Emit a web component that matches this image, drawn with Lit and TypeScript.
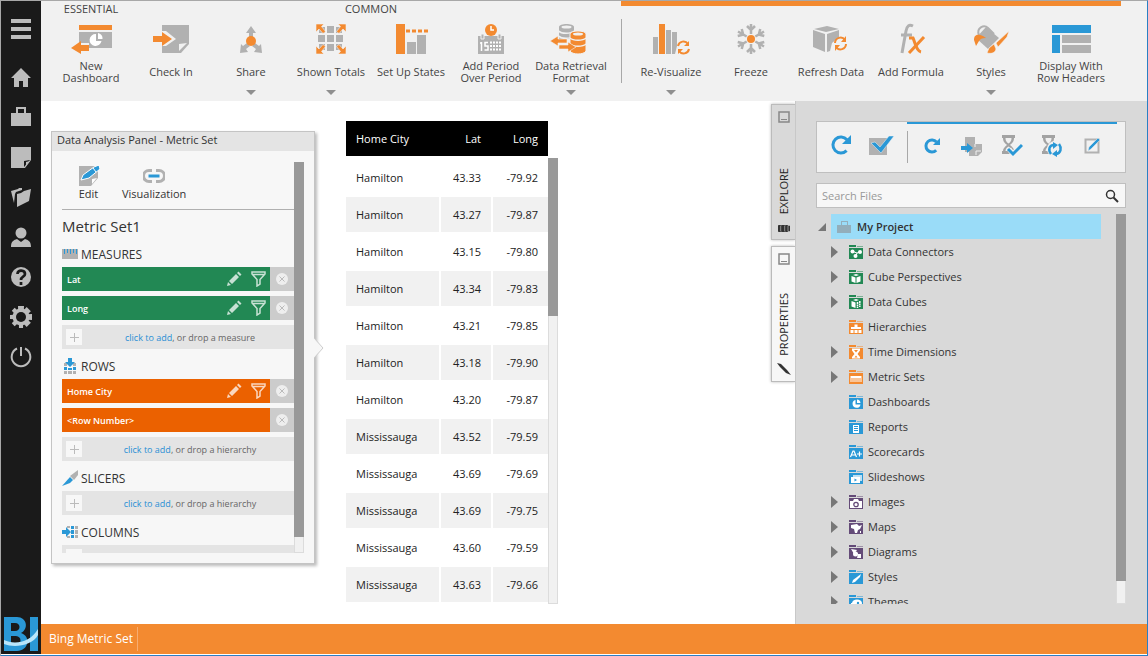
import { LitElement, html, svg, css, nothing } from "lit";
import { customElement, property } from "lit/decorators.js";

const ORANGE = "#f38a30";
const GREY = "#b1b1b1";
const BLUE = "#2a98d6";

const draw = (w: number, h: number, body: unknown) =>
  html`<svg width=${w} height=${h} viewBox="0 0 ${w} ${h}" aria-hidden="true">${body}</svg>`;

/* Ribbon icons share a 44x30 box. */
const ribbonIcons: Record<string, unknown> = {
  dashboard: svg`<path d="M10 1h33v5H10z" fill=${ORANGE}/><path d="M10 8h33v16H20v-5H10z" fill=${GREY}/>
    <path d="M27 10a6 6 0 1 0 5.500 7h-5.500z" fill="#fff"/><path d="M29 9a5.500 5.500 0 0 1 4.500 6H29z" fill="#fff"/>
    <path d="M2 24l10-7v4h8v6h-8v3z" fill=${ORANGE}/>`,
  checkin: svg`<path d="M13 1h27v19l-8 9H13v-7h4l10-7-10-8h-4z" fill=${GREY}/><path d="M30 27v-7l8-1z" fill="#f1f1f1"/>
    <path d="M4 12h9V8l10 7-10 7v-4H4z" fill=${ORANGE}/>`,
  share: svg`<g fill=${GREY}><path d="M22 2l5 7h-3v5h-4V9h-3z"/><path d="M11 29l1-9 2 2 4-3 3 3-4 3 2 3z"/><path d="M33 29l-1-9-2 2-4-3-3 3 4 3-2 3z"/></g>
    <circle cx="22" cy="17" r="5" fill=${ORANGE}/>`,
  totals: svg`<g fill=${GREY}><path d="M10 3h6v6h-6zM18 2h7v7h-7zM27 3h6v6h-6zM9 11h7v7H9zM18 11h7v7h-7zM27 11h7v7h-7zM10 20h6v6h-6zM18 20h7v7h-7zM27 20h6v6h-6z"/></g>
    <g fill=${ORANGE} stroke="#f1f1f1" stroke-width=".6"><path d="M7 0h8l-2.500 2.500 4 5-2.500 2-4-4.500L7 8z"/><path d="M37 0h-8l2.500 2.500-4 5 2.500 2 4-4.500L37 8z"/><path d="M7 30h8l-2.500-2.500 4-5-2.500-2-4 4.500L7 22z"/><path d="M37 30h-8l2.500-2.500-4-5 2.500-2 4 4.500L37 22z"/></g>`,
  states: svg`<path d="M7 0h9v30H7z" fill=${ORANGE}/><path d="M17 7h22" stroke=${ORANGE} stroke-width="3" stroke-dasharray="4 2"/>
    <path d="M18 18h9v12h-9zM28 11h9v19h-9z" fill=${GREY}/>`,
  period: svg`<path d="M9 12h26v18H9z" fill=${GREY}/><path d="M12 10h3v5h-3zM29 10h3v5h-3z" fill=${GREY} stroke="#f1f1f1"/>
    <path d="M12.500 18v9M11 19h1.500M19 18.500h-3v3.500h3v4h-3.500" stroke="#fff" fill="none" stroke-width="1.500"/>
    <path d="M21 18.500h12M21 22h12M21 25.500h12" stroke="#fff" stroke-width="2" stroke-dasharray="2 1"/>
    <circle cx="22" cy="6" r="6" fill=${ORANGE}/><path d="M22 2v4h3" stroke="#fff" fill="none" stroke-width="1.500"/>`,
  retrieval: svg`<path d="M10 3c0-4 15-4 15 0v12h-15z" fill=${GREY}/><ellipse cx="17.500" cy="3" rx="5" ry="1.500" fill="#f1f1f1"/><path d="M10 7c2 3 12 3 15 0M10 12c2 3 12 3 15 0" stroke="#f1f1f1" fill="none" stroke-width="1.500"/>
    <path d="M21 10c0-4 16-4 16 0v17c-2 4-14 4-16 0z" fill=${ORANGE} stroke="#f1f1f1"/><ellipse cx="29" cy="10" rx="5" ry="1.500" fill="#f1f1f1"/><path d="M21 14c3 3 13 3 16 0M21 20c3 3 13 3 16 0" stroke="#f1f1f1" fill="none" stroke-width="1.500"/>
    <path d="M1 17l8-5v3h9v4H9v3zM27 23l-8-5v3h-9v4h9v3z" fill=${ORANGE} stroke="#f1f1f1" stroke-width=".6"/>`,
  visualize: svg`<path d="M4 13h5v17H4zM17 6h5v24h-5zM23 8h5v14l-2 8h-3z" fill=${GREY}/><path d="M10 0h6v30h-6z" fill=${ORANGE}/>
    <g fill="none" stroke=${ORANGE} stroke-width="2"><path d="M29 22a5.500 5.500 0 0 1 10-2M40 25a5.500 5.500 0 0 1-10 2"/></g><path d="M40 17v5h-5zM29 30v-5h5z" fill=${ORANGE}/>`,
  freeze: svg`<g stroke=${GREY} stroke-width="2.500" fill="none">${[0, 60, 120, 180, 240, 300].map(
    (a) => svg`<path transform="rotate(${a} 22 15)" d="M22 10V0M18 2l4 4 4-4"/>`)}</g><circle cx="22" cy="15" r="4" fill=${ORANGE}/>`,
  refresh: svg`<g fill=${GREY}><path d="M18 2l12 3-13 3L5 5z"/><path d="M4 6l12 4v18L4 23z"/><path d="M18 10l12-4v7l-7 6-2 8-3 1z"/></g>
    <g fill="none" stroke=${ORANGE} stroke-width="2"><path d="M26 19a5.500 5.500 0 0 1 10-3M37 20a5.500 5.500 0 0 1-10 3"/></g><path d="M37 12v6h-5zM26 27v-6h5z" fill=${ORANGE}/>`,
  formula: svg`<path d="M24 2c-4-2-6 0-7 5l-4 22" stroke=${GREY} stroke-width="3" fill="none"/><path d="M12 11h11" stroke=${GREY} stroke-width="3"/>
    <path d="M20 14h4c2 4 3 13 8 14" stroke=${ORANGE} stroke-width="3" fill="none"/><path d="M35 13L20 29" stroke=${ORANGE} stroke-width="3"/>`,
  styles: svg`<path d="M17 3l13 11-11 11L7 14z" fill=${GREY}/><path d="M10 11c-3-7 5-11 9-7l6 6" fill="none" stroke=${GREY} stroke-width="2"/>
    <path d="M14 12c-7-3-9 0-9 4l2 6 3-5c1-2 3-3 7-3z" fill=${ORANGE}/><path d="M40 7L27 19l2 4L38 13zM25 20l-5 4-2 5c5 1 8 0 9-4z" fill=${ORANGE} stroke="#f1f1f1" stroke-width=".6"/>`,
  headers: svg`<path d="M3 1h39v8H3zM3 11h8v18H3z" fill=${BLUE}/><path d="M13 11h29v8H13zM13 21h29v8H13z" fill=${GREY}/>`,
};

interface Command { icon: string; label: string; menu?: boolean }

const essential: Command[] = [{ icon: "dashboard", label: "New Dashboard" }];
const common: Command[] = [
  { icon: "checkin", label: "Check In" },
  { icon: "share", label: "Share", menu: true },
  { icon: "totals", label: "Shown Totals", menu: true },
  { icon: "states", label: "Set Up States" },
  { icon: "period", label: "Add Period Over Period" },
  { icon: "retrieval", label: "Data Retrieval Format", menu: true },
];
const contextual: Command[] = [
  { icon: "visualize", label: "Re-Visualize", menu: true },
  { icon: "freeze", label: "Freeze" },
  { icon: "refresh", label: "Refresh Data" },
  { icon: "formula", label: "Add Formula" },
  { icon: "styles", label: "Styles", menu: true },
  { icon: "headers", label: "Display With Row Headers" },
];

const navIcons: [string, unknown][] = [
  ["Home", svg`<path d="M12 3l10 10h-3v9h-5v-6h-4v6H5v-9H2z"/>`],
  ["Projects", svg`<path d="M2 8h20v13H2zM7 8V2h10v6h-2V4H9v4z"/>`],
  ["Notes", svg`<path d="M2 2h20v13l-6 8H2z"/><path d="M15 22v-6l6-1z" fill="#1a1a1a"/><path d="M17 21v-4l4-1z"/>`],
  ["Folders", svg`<path d="M2 6l7-2 1-1 3 0v2L7 7l-1 2-1 9z"/><path d="M8 9l4-1 3-2 7-2-2 12-12 6z"/>`],
  ["Account", svg`<circle cx="12" cy="8" r="5.500"/><path d="M2 22c0-6 3-7 6-8l4 3 4-3c3 1 6 2 6 8z"/>`],
  ["Help", svg`<circle cx="12" cy="12" r="10"/><path d="M8.500 9c0-5 7.500-4 7.500 0 0 3-4 2.500-4 6M12 17v3" stroke="#1a1a1a" stroke-width="2.700" fill="none"/>`],
  ["Settings", svg`<g>${[0, 45, 90, 135].map((a) => svg`<path transform="rotate(${a} 12 12)" d="M9 1h6l-1 22h-4z"/>`)}<circle cx="12" cy="12" r="8.500"/></g><circle cx="12" cy="12" r="5" fill="#1a1a1a"/>`],
  ["Sign out", svg`<path d="M8 3.500a9.300 9.300 0 1 0 8 0M12 2v9" fill="none" stroke="#bcbcbc" stroke-width="2"/>`],
];

interface Field { label: string; editable: boolean }
interface Section { title: string; icon: unknown; tone: string; fields: Field[]; drop: string }

const sections: Section[] = [
  {
    title: "MEASURES", tone: "green", drop: "measure",
    icon: svg`<path d="M0 3h16v10H0z" fill=${GREY}/><path d="M2.500 3v5M5.500 3v4M8.500 3v5M11.500 3v4M14.500 3v5" stroke=${BLUE} stroke-width="1"/>`,
    fields: [{ label: "Lat", editable: true }, { label: "Long", editable: true }],
  },
  {
    title: "ROWS", tone: "orange", drop: "hierarchy",
    icon: svg`<path d="M2 5h3v3H2zM11 5h3v3h-3zM2 13h3v3H2zM6 13h4v3H6zM11 13h3v3h-3z" fill=${GREY}/><path d="M2 9h3v3H2zM6 10h4v2H6zM11 9h3v3h-3zM6 0h4v4h3L8 9 3 4h3z" fill=${BLUE}/>`,
    fields: [{ label: "Home City", editable: true }, { label: "<Row Number>", editable: false }],
  },
  {
    title: "SLICERS", tone: "orange", drop: "hierarchy", fields: [],
    icon: svg`<path d="M16 0v5l-4 5-4-4z" fill=${GREY}/><path d="M8 7l3 3-3 3-8 3z" fill=${BLUE}/>`,
  },
  {
    title: "COLUMNS", tone: "orange", drop: "hierarchy", fields: [],
    icon: svg`<path d="M13 2h3v3h-3zM13 6h3v4h-3zM13 11h3v3h-3zM5 2h3v2H5zM5 12h3v2H5z" fill=${GREY}/><path d="M9 2h3v3H9zM9 6h3v4H9zM9 11h3v3H9zM0 6h4V3l5 5-5 5v-3H0z" fill=${BLUE}/>`,
  },
];

const records: [string, string, string][] = [
  ["Hamilton", "43.33", "-79.92"], ["Hamilton", "43.27", "-79.87"], ["Hamilton", "43.15", "-79.80"],
  ["Hamilton", "43.34", "-79.83"], ["Hamilton", "43.21", "-79.85"], ["Hamilton", "43.18", "-79.90"],
  ["Hamilton", "43.20", "-79.87"], ["Mississauga", "43.52", "-79.59"], ["Mississauga", "43.69", "-79.69"],
  ["Mississauga", "43.69", "-79.75"], ["Mississauga", "43.60", "-79.59"], ["Mississauga", "43.63", "-79.66"],
];

const GREEN = "#228854";
const PURPLE = "#644b78";
const AMBER = "#f38a30";

interface Folder { name: string; color: string; open?: boolean; glyph: unknown }

const folders: Folder[] = [
  { name: "Data Connectors", color: GREEN, open: true, glyph: svg`<path d="M4 6.500l4 1.500 3-1M8 8l-1 3" stroke="#fff" fill="none"/><circle cx="3.500" cy="6.500" r="2"/><circle cx="11" cy="7" r="2"/><circle cx="6.500" cy="11" r="2"/>` },
  { name: "Cube Perspectives", color: GREEN, open: true, glyph: svg`<path d="M2.500 6l4 1.500V13l-4-1.500zM7.500 7.500l4-1.500v5.500l-4 1.500zM4 5l3-1 3 1-3 1z"/>` },
  { name: "Data Cubes", color: GREEN, open: true, glyph: svg`<path d="M2.500 6l4 1.500V13l-4-1.500zM4 5l3-1 3 1-3 1z"/><path d="M8.500 7v6M10.800 6v6" stroke="#fff" stroke-dasharray="2 .5" stroke-width="1.500"/>` },
  { name: "Hierarchies", color: AMBER, glyph: svg`<path d="M5.500 4.500h3V7h3.500v2h-10V7h3.500zM1.500 10h3v3h-3zM5.500 10h3v3h-3zM9.500 10h3v3h-3z"/>` },
  { name: "Time Dimensions", color: AMBER, open: true, glyph: svg`<path d="M3 3.500h8v2L8.500 9l2.500 3v1.500H3V12l2.500-3L3 5.500z"/><path d="M5 5h4L7 7.500zM5.500 12.500L7 10.500l1.500 2z" fill=${AMBER}/>` },
  { name: "Metric Sets", color: AMBER, open: true, glyph: svg`<path d="M1.500 6h11v6h-1V8h-1v4h-1V8h-1v4h-1V8h-1v4h-1V8h-1v4h-1V8h-1v4h-1z"/>` },
  { name: "Dashboards", color: BLUE, glyph: svg`<path d="M6.500 5a4 4 0 1 0 5 4.500h-5z"/><path d="M8 4.500a4 4 0 0 1 3.500 3.500H8z"/>` },
  { name: "Reports", color: BLUE, glyph: svg`<path d="M4 5h6v8H4z"/><path d="M5 6.500h4M5 8.500h4M5 10.500h4" stroke=${BLUE}/>` },
  { name: "Scorecards", color: BLUE, glyph: svg`<path d="M1.500 12L4 6h1l2.500 6M2.500 10h4M8 9h5M10.500 6.500v5" stroke="#fff" fill="none" stroke-width="1.200"/>` },
  { name: "Slideshows", color: BLUE, glyph: svg`<path d="M4 5h9v6H4z" opacity=".7"/><path d="M2 7h9v6H2z"/><path d="M5.500 8.500v3l2.500-1.500z" fill=${BLUE}/>` },
  { name: "Images", color: PURPLE, open: true, glyph: svg`<path d="M1 6h3l1-2h4l1 2h3v7H1z"/><circle cx="7" cy="9.500" r="2.200" fill="#fff" stroke=${PURPLE} stroke-width="1.300"/>` },
  { name: "Maps", color: PURPLE, open: true, glyph: svg`<path d="M2 5l6-1 2 2 3-1-2 4-2 1-1 3H6l-1-4-3-1zM11 11h1v2h-1z"/>` },
  { name: "Diagrams", color: PURPLE, open: true, glyph: svg`<path d="M2 4l6 1-3 4z"/><circle cx="6.500" cy="9" r="2.500"/><path d="M9 9h3v4H8z"/>` },
  { name: "Styles", color: BLUE, open: true, glyph: svg`<path d="M12 4l-1 3-5 5-3 1 1-3z"/>` },
  { name: "Themes", color: BLUE, open: true, glyph: svg`<ellipse cx="8" cy="8" rx="5" ry="3.500"/><circle cx="9" cy="8" r="1.200" fill=${BLUE}/><path d="M2 8h2v3H2z"/>` },
];

@customElement("scroll-rail")
class ScrollRail extends LitElement {
  @property({ type: Number }) thumb = 50;
  static styles = css`
    :host { display: block; flex: none; width: 10px; background: #f1f1f1; box-shadow: inset 0 0 0 1px #dcdcdc; }
    .thumb { background: #999; }
  `;
  render() {
    return html`<div class="thumb" style="height:${this.thumb}%"></div>`;
  }
}

@customElement("ribbon-bar")
class RibbonBar extends LitElement {
  static styles = css`
    :host { display: flex; height: 100px; background: #f1f1f1; color: #444; padding-left: 10px; box-sizing: border-box; }
    .group { display: grid; grid-template-rows: 18px 1fr; justify-items: center; }
    .caption { font-size: 11px; line-height: 16px; }
    .commands { display: flex; }
    .contextual { display: flex; margin-left: 10px; padding: 13px 10px 0 0; border-top: 5px solid #f38a30; box-sizing: border-box; }
    .rule { width: 1px; height: 64px; margin-right: 9px; background: #a8a8a8; }
    .contextual .commands { height: 77px; }
    button { all: unset; box-sizing: border-box; width: 80px; padding-top: 5px; display: flex; flex-direction: column; align-items: center; font-size: 11px; line-height: 12px; text-align: center; cursor: pointer; }
    .label { display: flex; align-items: center; height: 36px; padding: 0 2px; }
    .arrow { border: 5px solid transparent; border-top-color: #8f8f8f; border-bottom: 0; }
    svg { flex: none; display: block; overflow: visible; }
  `;
  private command(c: Command) {
    return html`<button aria-haspopup=${c.menu ? "menu" : nothing}>
      ${draw(44, 30, ribbonIcons[c.icon])}
      <span class="label">${c.label}</span>
      ${c.menu ? html`<span class="arrow"></span>` : nothing}
    </button>`;
  }
  render() {
    return html`
      <div class="group"><span class="caption">ESSENTIAL</span><div class="commands">${essential.map((c) => this.command(c))}</div></div>
      <div class="group"><span class="caption">COMMON</span><div class="commands">${common.map((c) => this.command(c))}</div></div>
      <div class="contextual"><span class="rule"></span><div class="commands">${contextual.map((c) => this.command(c))}</div></div>
    `;
  }
}

@customElement("nav-rail")
class NavRail extends LitElement {
  static styles = css`
    :host { display: flex; flex-direction: column; width: 40px; background: #1a1a1a; }
    button { all: unset; display: grid; place-items: center; height: 40px; cursor: pointer; fill: #bcbcbc; }
    .menu { height: 56px; }
    .logo { margin-top: auto; line-height: 0; padding-bottom: 2px; }
    svg { display: block; }
  `;
  render() {
    return html`
      <button class="menu" aria-label="Menu">${draw(20, 20, svg`<path d="M0 0h20v4H0zM0 8h20v4H0zM0 16h20v4H0z"/>`)}</button>
      ${navIcons.map(([name, glyph]) => html`<button aria-label=${name}>${draw(24, 24, glyph)}</button>`)}
      <div class="logo">${draw(40, 36, svg`<g fill=${BLUE}><path fill-rule="evenodd" d="M3 1h13c10 0 12 12 4 16 10 3 8 18-4 18H3zM10 7v8h4c6 0 6-8 0-8zM10 20v9h5c6 0 6-9 0-9z"/><path d="M29 1h8v34h-8z"/></g>
        <path d="M3 24c10 5 26 3 34-11v6C31 30 13 32 3 28z" fill="#b9e6fb"/>`)}</div>
    `;
  }
}

@customElement("analysis-panel")
class AnalysisPanel extends LitElement {
  static styles = css`
    :host { position: relative; display: flex; flex-direction: column; box-sizing: border-box; width: 264px; background: #f7f7f7; border: 1px solid #c4c4c4; box-shadow: 2px 2px 3px #bbb; color: #333; font-size: 11px; }
    .title { height: 19px; line-height: 16px; padding-left: 5px; background: #e4e4e4; flex: none; }
    .notch { position: absolute; left: 100%; top: 205px; }
    .body { flex: 1; min-height: 0; display: flex; margin: 11px 10px 10px; }
    .content { flex: 1; overflow: hidden; }
    .tools { display: flex; gap: 7px; height: 47px; border-bottom: 1px solid #b0b0b0; box-sizing: content-box; }
    button { all: unset; cursor: pointer; box-sizing: border-box; }
    .tool { display: flex; flex-direction: column; align-items: center; padding-top: 4px; line-height: 16px; min-width: 53px; }
    svg { display: block; flex: none; }
    h2 { margin: 0; height: 27px; line-height: 32px; font-size: 15px; font-weight: 400; }
    h3 { margin: 0; height: 30px; display: flex; align-items: center; gap: 3px; padding-top: 4px; box-sizing: border-box; font-size: 12px; font-weight: 400; }
    .stack { display: flex; flex-direction: column; gap: 5px; }
    .field { display: flex; align-items: center; height: 24px; color: #fff; font-size: 9px; font-weight: 600; }
    .name { flex: 1; padding-left: 5px; }
    .field.green { background: #228854; }
    .field.orange { background: #eb6100; }
    .action { width: 24px; height: 24px; display: grid; place-items: center; }
    .remove { background: #ccc; }
    .drop { display: flex; align-items: center; height: 24px; padding: 0 4px; background: #e4e4e4; font-size: 9px; box-sizing: border-box; color: #666; }
    .plus { width: 16px; height: 16px; background: #f7f7f7; }
    .hint { flex: 1; text-align: center; padding-left: 8px; }
    a { color: #2a8fd4; text-decoration: none; }
  `;
  private field(f: Field, tone: string) {
    return html`<div class="field ${tone}">
      <span class="name">${f.label}</span>
      ${f.editable ? html`
        <button class="action" aria-label="Edit">${draw(16, 16, svg`<g fill="#fff" opacity=".75"><path d="M1 15l1-4 3 3zM3 10l7-7 3 3-7 7zM11 2l1.500-1.500 3 3L14 5z"/></g>`)}</button>
        <button class="action" aria-label="Filter">${draw(16, 16, svg`<path d="M2 1h13v2L10 8.500V13l-3 2V8.500L2 3zM2 3.500h13" fill="none" stroke="#fff" stroke-width="1.500" opacity=".75"/>`)}</button>` : nothing}
      <button class="action remove" aria-label="Remove">${draw(12, 12, svg`<circle cx="6" cy="6" r="6" fill="#eee"/><path d="M3.500 3.500l5 5M8.500 3.500l-5 5" stroke="#bbb"/>`)}</button>
    </div>`;
  }
  render() {
    return html`
      <div class="title">Data Analysis Panel - Metric Set</div>
      <svg class="notch" width="10" height="22" aria-hidden="true"><path d="M0 1l9 10-9 10" fill="#f7f7f7" stroke="#ccc"/></svg>
      <div class="body">
        <div class="content">
          <div class="tools">
            <button class="tool">${draw(22, 20, svg`<path d="M1 0h19v12l-7 8H1z" fill=${GREY}/><path d="M14 18v-5l5-1z" fill="#fff"/><path d="M3 14l2-5L16 1l5-2 1 4L11 12z" fill=${BLUE} stroke="#fff"/><path d="M15 2l3 4" stroke="#fff"/>`)}Edit</button>
            <button class="tool">${draw(22, 20, svg`<path d="M9 4.500H6a5.500 5.500 0 0 0 0 11h3M13 4.500h3a5.500 5.500 0 0 1 0 11h-3" fill="none" stroke=${GREY} stroke-width="3"/><path d="M5 8h12v4H5z" fill=${BLUE} stroke="#f7f7f7"/>`)}Visualization</button>
          </div>
          <h2>Metric Set1</h2>
          ${sections.map((s) => html`<section>
            <h3>${draw(16, 16, s.icon)}${s.title}</h3>
            <div class="stack">
              ${s.fields.map((f) => this.field(f, s.tone))}
              <div class="drop">
                <button class="plus" aria-label="Add">${draw(16, 16, svg`<path d="M8.500 4v9M4 8.500h9" stroke="#bbb"/>`)}</button>
                <span class="hint"><a href="#">click to add</a>, or drop a ${s.drop}</span>
              </div>
            </div>
          </section>`)}
        </div>
        <scroll-rail .thumb=${96}></scroll-rail>
      </div>
    `;
  }
}

@customElement("metric-table")
class MetricTable extends LitElement {
  static styles = css`
    :host { display: flex; overflow: hidden; color: #222; font-size: 11px; }
    table { border-spacing: 0; align-self: flex-start; }
    th, td { height: 35px; padding: 0 12px 0 10px; text-align: right; line-height: 16px; }
    th { background: #000; color: #fff; font-weight: 400; border-bottom: 4px solid #fff; }
    td { border-bottom: 2px solid #fff; border-right: 2px solid #fff; padding-right: 10px; }
    th:last-child, td:last-child { border-right: 0; padding-right: 10px; min-width: 35px; }
    th:first-child, td:first-child { text-align: left; min-width: 73px; }
    th:nth-child(2), td:nth-child(2) { min-width: 30px; }
    tbody tr:nth-child(even) { background: #f1f1f1; }
    scroll-rail { margin-top: 37px; }
  `;
  render() {
    return html`
      <table>
        <thead><tr><th scope="col">Home City</th><th scope="col">Lat</th><th scope="col">Long</th></tr></thead>
        <tbody>${records.map((r) => html`<tr>${r.map((v) => html`<td>${v}</td>`)}</tr>`)}</tbody>
      </table>
      <scroll-rail .thumb=${35.5}></scroll-rail>
    `;
  }
}

@customElement("side-tabs")
class SideTabs extends LitElement {
  static styles = css`
    :host { display: flex; flex-direction: column; gap: 6px; width: 24px; margin-top: 3px; }
    button { all: unset; box-sizing: border-box; height: 136px; padding: 6px 0 5px; display: flex; flex-direction: column; align-items: center; background: #f7f7f7; border: 1px solid #bbb; border-right: 0; box-shadow: 0 0 3px #bbb; color: #222; font-size: 11px; cursor: pointer; }
    .active { background: #d9d9d9; }
    .text { writing-mode: vertical-rl; transform: rotate(180deg); margin-top: auto; line-height: 16px; padding-top: 6px; }
    svg { display: block; }
  `;
  render() {
    const pane = draw(12, 12, svg`<path d="M1 1h10v10H1z" fill="none" stroke="#888" stroke-width="1.500"/><path d="M3 8.500h6" stroke="#888"/>`);
    return html`
      <button class="active">${pane}<span class="text">EXPLORE</span>${draw(14, 14, svg`<path d="M1.500 5.500h2v6h-2zM4.500 5.500h3v6h-3zM8.500 5.500h2v6h-2zM11.500 6h1v5h-1z" fill="#333" stroke="#333"/><path d="M3.700 6v5M7.700 6v5M11 6v5" stroke="#aaa" stroke-width=".8"/>`)}</button>
      <button>${pane}<span class="text">PROPERTIES</span>${draw(14, 14, svg`<path d="M0 1l4 1 6 6 4 5-5-2-6-6z" fill="#333"/>`)}</button>
    `;
  }
}

@customElement("explorer-panel")
class ExplorerPanel extends LitElement {
  static styles = css`
    :host { display: flex; flex-direction: column; box-sizing: border-box; width: 352px; padding: 20px 21px 20px 20px; background: #d9d9d9; border-left: 1px solid #c8c8c8; color: #333; font-size: 11px; }
    .toolbar { display: flex; height: 52px; flex: none; box-sizing: border-box; background: #f1f1f1; border: 1px solid #bfbfbf; padding: 0 8px 0 4px; }
    button { all: unset; cursor: pointer; width: 40px; height: 45px; display: grid; place-items: center; }
    .main { display: flex; padding-right: 6px; }
    .more { flex: 1; display: flex; border-top: 2px solid #2a98d6; height: 45px; box-sizing: border-box; }
    .more button { height: 43px; }
    .rule { width: 1px; height: 32px; margin: 7px 4px 0 0; background: #a8a8a8; }
    .search { display: flex; align-items: center; flex: none; height: 25px; margin: 10px 0 6px; box-sizing: border-box; border: 1px solid #bfbfbf; background: #f7f7f7; }
    .search button { width: 26px; height: 23px; }
    input { all: unset; flex: 1; padding-left: 5px; font-size: 11px; }
    input::placeholder { color: #999; opacity: 1; }
    .files { flex: 1; min-height: 0; display: flex; }
    .tree { flex: 1; overflow: hidden; margin-right: 15px; }
    ul { list-style: none; margin: 0; padding: 0 0 0 15px; }
    .row { display: flex; align-items: center; height: 25px; }
    .folder { gap: 5px; }
    .twist { width: 13px; height: 12px; }
    .root-name { flex: 1; display: flex; align-items: center; gap: 6px; height: 25px; padding-left: 6px; background: #9adcf8; font-weight: 600; }
    .root .twist { width: 15px; }
    svg { display: block; flex: none; }
  `;
  render() {
    const arc = (r: number) => svg`<path d="M${11 + r * 0.7} ${11 + r * 0.7}A${r} ${r} 0 1 1 ${11 + r * 0.75} ${11 - r * 0.66}" fill="none" stroke=${BLUE} stroke-width="3"/>`;
    const glass = svg`<path d="M1 0h13v3h-1c0 4-2 5-4 7 2 2 4 3 4 6h1v3H1v-3h1c0-3 2-4 4-6-2-2-4-3-4-7H1zM4.500 3c0 3 1 4 3 5.500 2-1.500 3-2.500 3-5.500zM4.500 16h6c0-2-1-3-3-4.500-2 1.500-3 2.500-3 4.500z" fill-rule="evenodd" fill="#a3a3a3"/>`;
    return html`
      <div class="toolbar">
        <div class="main">
          <button aria-label="Refresh">${draw(22, 22, svg`${arc(8)}<path d="M21 1v9h-9z" fill=${BLUE}/>`)}</button>
          <button aria-label="Select">${draw(26, 22, svg`<path d="M1 4h18v17H1z" fill=${GREY}/><path d="M7 8l5 5 9-11h5L13 19 3 9z" fill=${BLUE} stroke="#f1f1f1" stroke-width=".5"/>`)}</button>
        </div>
        <div class="more">
          <span class="rule"></span>
          <button aria-label="Reload item">${draw(22, 22, svg`${arc(6)}<path d="M19 3v7h-7z" fill=${BLUE}/>`)}</button>
          <button aria-label="Check in">${draw(22, 22, svg`<path d="M4 2h10v7h7v8l-4 4H8v-4H4z" fill=${GREY}/><path d="M14 9v3M15 20v-4h5" stroke="#f1f1f1" fill="none"/><path d="M0 11h6V8l6 5-6 5v-3H0z" fill=${BLUE}/>`)}</button>
          <button aria-label="Approve">${draw(22, 22, svg`${glass}<path d="M8 14l4 5 9-9" stroke="#f1f1f1" stroke-width="5" fill="none"/><path d="M7 14l5 5 9-9" stroke=${BLUE} stroke-width="3" fill="none"/>`)}</button>
          <button aria-label="Recheck">${draw(22, 22, svg`${glass}<circle cx="14" cy="14" r="8" fill="#f1f1f1"/><path d="M10 19c-3-4-2-9 3-9M18 9c3 4 2 9-3 10" stroke=${BLUE} stroke-width="2.500" fill="none"/><path d="M12 7l5 3-5 4zM16 15l-5 4 5 3z" fill=${BLUE}/>`)}</button>
          <button aria-label="Edit">${draw(22, 22, svg`<path d="M4.500 4.500h13v13h-13z" fill="none" stroke=${GREY} stroke-width="2"/><path d="M7 16l1-4 9-9 2 2-9 9z" fill=${BLUE} stroke="#f1f1f1" stroke-width=".5"/>`)}</button>
        </div>
      </div>
      <div class="search">
        <input type="text" placeholder="Search Files" aria-label="Search Files" />
        <button aria-label="Search">${draw(14, 14, svg`<circle cx="5.500" cy="5.500" r="4" fill="none" stroke="#333" stroke-width="1.500"/><path d="M8.500 8.500l4.500 4.500" stroke="#333" stroke-width="2"/>`)}</button>
      </div>
      <div class="files">
        <div class="tree">
          <div class="row root">
            <svg class="twist" viewBox="0 0 15 12" aria-hidden="true"><path d="M10 2v8H2z" fill="#777"/></svg>
            <span class="root-name">${draw(14, 14, svg`<path d="M0 5h14v8H0zM4 5V1h7v4h-1V2H5v3z" fill="#93aebb"/>`)}My Project</span>
          </div>
          <ul>${folders.map((f) => html`<li class="row folder">
            <svg class="twist" viewBox="0 0 13 12" aria-hidden="true">${f.open ? svg`<path d="M0 0l7 6-7 6z" fill="#777"/>` : nothing}</svg>
            ${draw(14, 14, svg`<path d="M0 0h7v2H0zM0 3h14v11H0z" fill=${f.color}/><path d="M8 1.500h6" stroke=${f.color} opacity=".5"/><g fill="#fff">${f.glyph}</g>`)}
            <span>${f.name}</span></li>`)}</ul>
        </div>
        <scroll-rail .thumb=${94}></scroll-rail>
      </div>
    `;
  }
}

@customElement("app-root")
class AppRoot extends LitElement {
  static styles = css`
    :host { display: grid; grid-template: auto 1fr 30px / 40px 1fr; box-sizing: border-box; height: 100vh; border: 1px solid #a8a8a8; border-right-color: #2a80c4; border-bottom-color: #2a80c4; font-family: "Open Sans", "Noto Sans", sans-serif; overflow: hidden; background: #fff; padding-bottom: 1px; }
    nav-rail { grid-row: 1 / 4; }
    .work { display: flex; min-height: 0; overflow: hidden; }
    .canvas { flex: 1; display: flex; min-width: 0; padding: 20px 10px; gap: 31px; }
    analysis-panel { margin: 10px 0 40px; }
    footer { display: flex; align-items: center; background: #f38a30; color: #fff; font-size: 12px; }
    .status { padding: 0 4px 0 8px; line-height: 24px; border-right: 1px solid #f7ad70; }
  `;
  render() {
    return html`
      <nav-rail></nav-rail>
      <ribbon-bar></ribbon-bar>
      <div class="work">
        <main class="canvas"><analysis-panel></analysis-panel><metric-table></metric-table></main>
        <side-tabs></side-tabs>
        <explorer-panel></explorer-panel>
      </div>
      <footer><span class="status">Bing Metric Set</span></footer>
    `;
  }
}
